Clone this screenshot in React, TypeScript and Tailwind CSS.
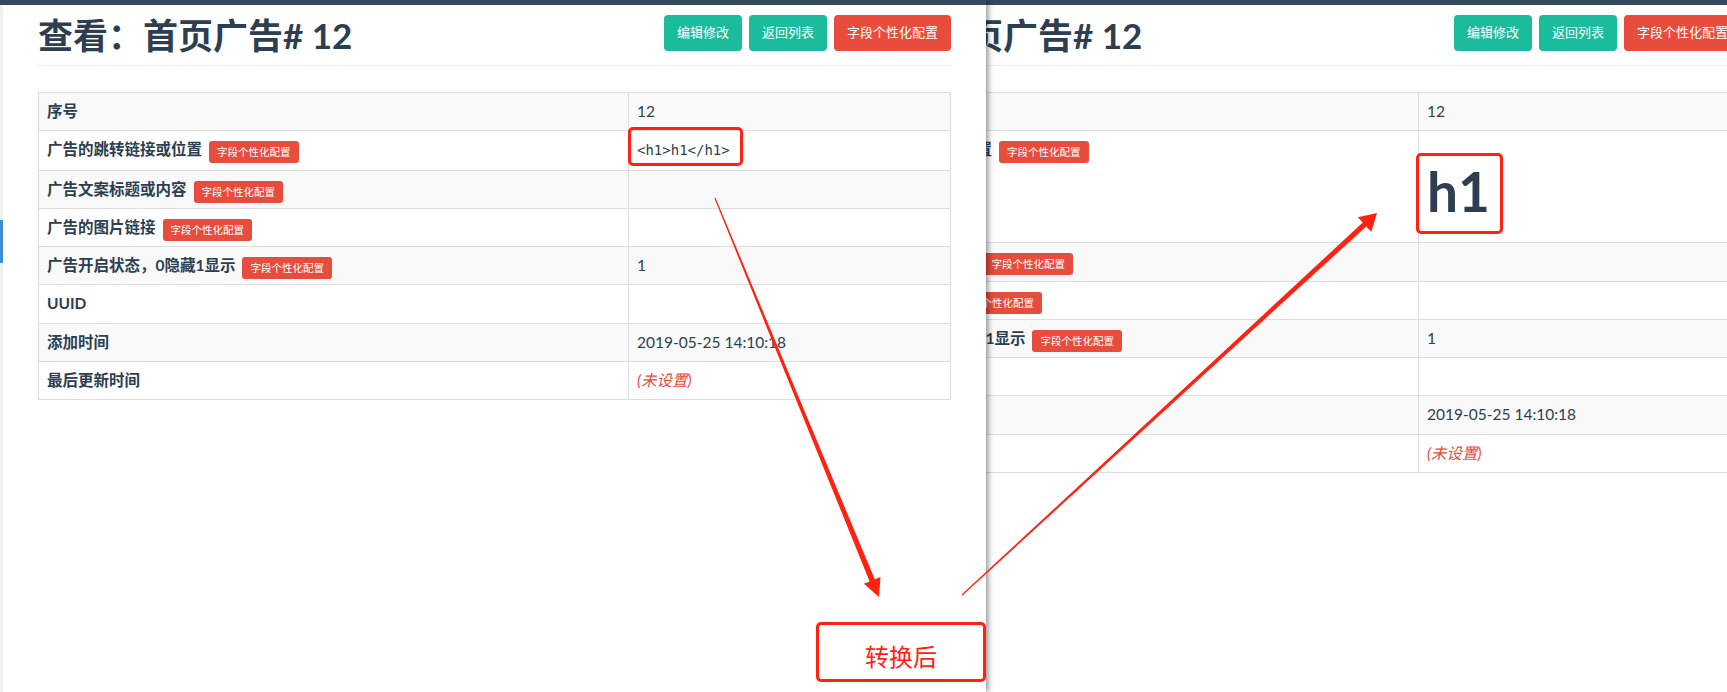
const rows = [
  { label: "序号", badge: false, value: "12" },
  { label: "广告的跳转链接或位置", badge: true, value: "link" },
  { label: "广告文案标题或内容", badge: true, value: "" },
  { label: "广告的图片链接", badge: true, value: "" },
  { label: "广告开启状态，0隐藏1显示", badge: true, value: "1" },
  { label: "UUID", badge: false, value: "" },
  { label: "添加时间", badge: false, value: "2019-05-25 14:10:18" },
  { label: "最后更新时间", badge: false, value: "unset" },
];

function Badge() {
  return (
    <span className="ml-[7px] mt-[2px] -mb-[3px] inline-block h-[22px] rounded-[3px] bg-[#e74c3c] px-2 align-top text-[10.5px] font-normal leading-[22px] text-white">
      字段个性化配置
    </span>
  );
}

function Value({ value, rendered }: { value: string; rendered: boolean }) {
  if (value === "link") {
    if (rendered) {
      return <h1 className="mt-[19px] mb-[10px] text-[55px] font-bold leading-[66px]">h1</h1>;
    }
    return <span className="font-['DejaVu_Sans_Mono',monospace] text-[14px]">&lt;h1&gt;h1&lt;/h1&gt;</span>;
  }
  if (value === "unset") {
    return <span className="italic text-[#e74c3c]">(未设置)</span>;
  }
  return <>{value}</>;
}

function Page({ rendered }: { rendered: boolean }) {
  return (
    <div className="flex h-full w-[989px] shrink-0 flex-col bg-white">
      <div className="h-[5px] bg-[#34495e]" />
      <div className="flex flex-1">
        <div className="w-[3px] bg-[#f0f0f0]">
          <div className="mt-[215px] h-[43px] bg-[#3c8dd6]" />
        </div>
        <div className="w-[913px] ml-[35px]">
          <div className="flex h-[61px] items-start justify-between border-b border-[#eee] pt-[10px]">
            <h1 className="whitespace-nowrap text-[35px] font-bold leading-[40px]">
              查看：首页广告<span className="text-[35px]"># 12</span>
            </h1>
            <div className="flex gap-[7px]">
              <button className="h-[36px] w-[78px] whitespace-nowrap rounded-[4px] bg-[#1abc9c] text-[13px] text-white">编辑修改</button>
              <button className="h-[36px] w-[78px] whitespace-nowrap rounded-[4px] bg-[#1abc9c] text-[13px] text-white">返回列表</button>
              <button className="h-[36px] w-[117px] whitespace-nowrap rounded-[4px] bg-[#e74c3c] text-[13px] text-white">字段个性化配置</button>
            </div>
          </div>
          <table className="mt-[26px] w-[913px] table-fixed border-collapse border border-[#ddd] text-[15.5px]">
            <colgroup>
              <col className="w-[590px]" />
              <col />
            </colgroup>
            <tbody>
              {rows.map((r, i) => (
                <tr key={r.label} className={i % 2 === 0 ? "bg-[#f9f9f9]" : "bg-white"}>
                  <th className="border border-[#ddd] px-2 py-2 text-left align-top font-bold leading-[21.25px]">
                    {r.label}
                    {r.badge && <Badge />}
                  </th>
                  <td className="border border-[#ddd] px-2 py-2 align-top leading-[21.25px]">
                    <Value value={r.value} rendered={rendered} />
                  </td>
                </tr>
              ))}
            </tbody>
          </table>
        </div>
      </div>
    </div>
  );
}

export default function App() {
  return (
    <div className="relative flex h-[692px] w-[1727px] overflow-hidden bg-white font-['Lato','Noto_Sans_CJK_SC',sans-serif] text-[#2c3e50]">
      <div className="relative z-10 flex w-[986px] shrink-0 overflow-hidden bg-white shadow-[2px_0_6px_rgba(0,0,0,0.45)]">
        <Page rendered={false} />
      </div>
      <div className="flex flex-1 overflow-hidden">
        <div className="-ml-[196px] flex">
          <Page rendered={true} />
        </div>
      </div>

      <div className="pointer-events-none absolute inset-0 z-20">
        <div className="absolute left-[628px] top-[127px] h-[39px] w-[115px] rounded-[5px] border-[3px] border-[#ff2212]" />
        <div className="absolute left-[1416px] top-[153px] h-[81px] w-[87px] rounded-[5px] border-[3px] border-[#ff2212]" />
        <div className="absolute left-[816px] top-[622px] flex h-[60px] w-[170px] items-center justify-center rounded-[5px] border-[3px] border-[#ff2212] pt-[8px] font-['Noto_Sans_CJK_SC',sans-serif] text-[24px] text-[#ff2212]">
          转换后
        </div>
        <svg className="absolute inset-0" width="1727" height="692" viewBox="0 0 1727 692">
          <polygon
            fill="#ff2212"
            points="714.45,198.23 869.61,581.46 863.88,583.82 879,597 880.52,576.98 874.79,579.34 715.55,197.77"
          />
          <polygon
            fill="#ff2212"
            points="962.41,595.44 1366.25,226.42 1371.26,231.87 1377,213 1357.72,217.15 1362.73,222.6 961.59,594.56"
          />
        </svg>
      </div>
    </div>
  );
}
